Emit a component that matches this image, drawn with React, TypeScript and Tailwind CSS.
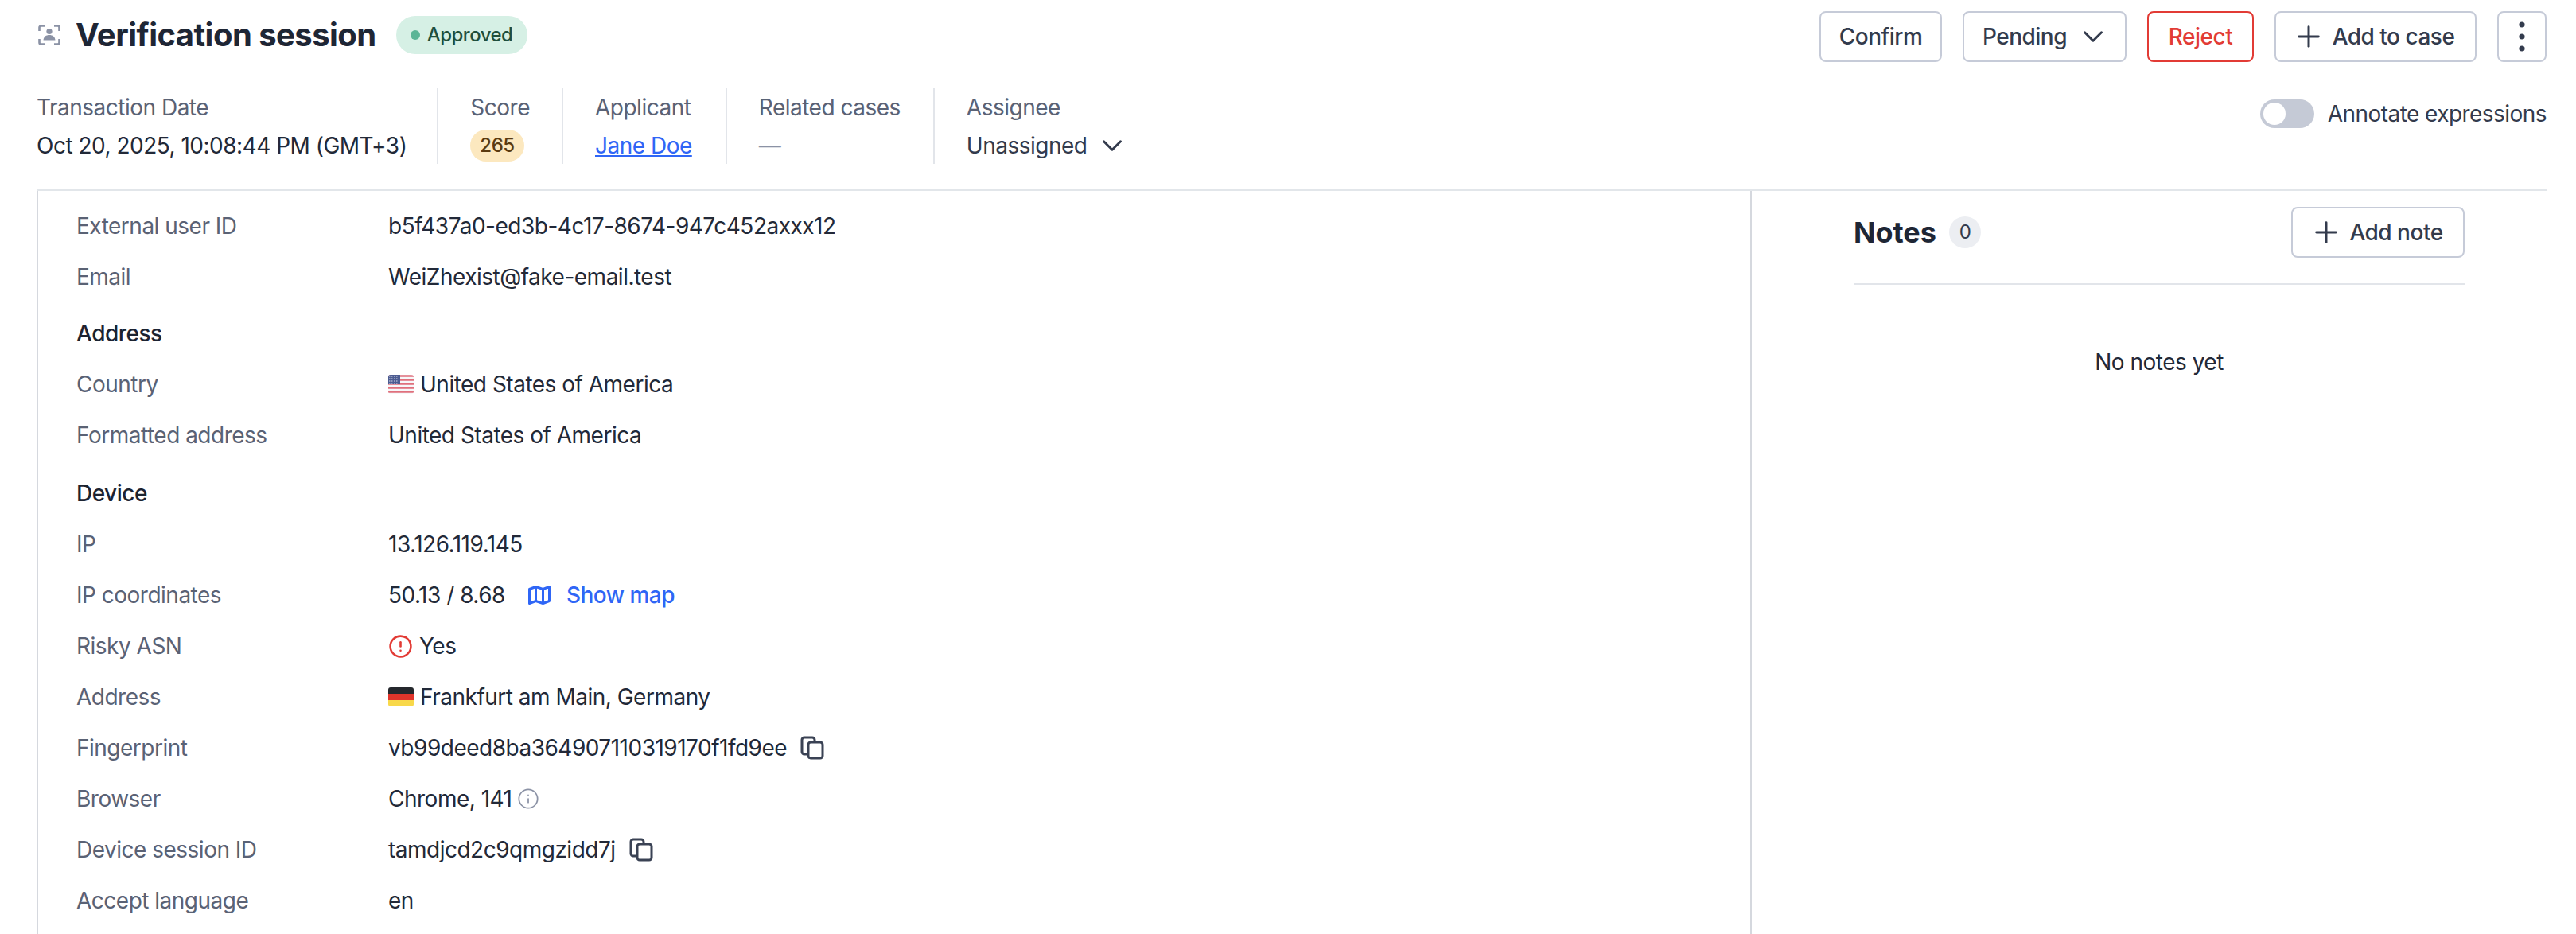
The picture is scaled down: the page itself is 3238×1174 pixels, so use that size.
import React from "react";
import { ChevronDown, CircleAlert, Info, Plus } from "lucide-react";

const ScanUserIcon = () => (
	<svg className="w-[28px] h-[26px] shrink-0" viewBox="0 0 28 26" fill="none">
		<path
			d="M8 1.5H3.5a2 2 0 0 0-2 2V8M20 1.5h4.5a2 2 0 0 1 2 2V8M8 24.5H3.5a2 2 0 0 1-2-2V18M20 24.5h4.5a2 2 0 0 0 2-2V18"
			stroke="#8b92a5"
			strokeWidth="2.6"
		/>
		<circle cx="14" cy="8.5" r="3.6" fill="#8b92a5" />
		<path d="M6.5 19.5c.4-4.5 3.6-6.5 7.5-6.5s7.100 2 7.500 6.500z" fill="#8b92a5" />
	</svg>
);

const MapIcon = () => (
	<svg className="w-[28px] h-[24px] shrink-0" viewBox="0 0 28 24" fill="none" stroke="#2f66f6" strokeWidth="3" strokeLinejoin="round">
		<path d="M1.500 4.500 9.500 1.500 18.500 4.500 26.500 1.500V19.500L18.500 22.500 9.500 19.500 1.500 22.500z" />
		<path d="M9.500 1.500V19.500M18.500 4.500V22.500" />
	</svg>
);

const CopyIcon = () => (
	<svg className="w-[30px] h-[30px] shrink-0" viewBox="0 0 30 30" fill="none" stroke="#3a4254" strokeWidth="3">
		<path d="M8 23H5a3 3 0 0 1-3-3V5a3 3 0 0 1 3-3h10a3 3 0 0 1 3 3v2" />
		<rect x="10" y="8" width="18" height="20" rx="3" />
	</svg>
);

const UsFlag = () => (
	<svg className="w-[32px] h-[24px] shrink-0 rounded-[3px]" viewBox="0 0 32 24">
		<rect width="32" height="24" fill="#f7f7f9" />
		<path d="M0 1.500h32M0 6.500h32M0 11.500h32M0 16.500h32M0 21.500h32" stroke="#e0707c" strokeWidth="2.500" />
		<rect width="15" height="12" fill="#4d5d92" />
		<path d="M1 2h13M1 5h13M1 8h13M1 11h13" stroke="#d7dbe8" strokeWidth="1" strokeDasharray="1.500 1.500" />
	</svg>
);

const DeFlag = () => (
	<div className="w-[32px] h-[24px] shrink-0 rounded-[3px] overflow-hidden flex flex-col">
		<div className="flex-1 bg-[#25282d]" />
		<div className="flex-1 bg-[#e0352b]" />
		<div className="flex-1 bg-[#f8d84a]" />
	</div>
);

const Row = ({ label, children }: { label: string; children: React.ReactNode }) => (
	<div className="flex items-center h-[64px]">
		<div className="w-[392px] shrink-0 text-[#5a6275]">{label}</div>
		<div className="flex items-center text-[#222938]">{children}</div>
	</div>
);

const Heading = ({ children }: { children: React.ReactNode }) => (
	<div className="flex items-center h-[64px] mt-[7px] font-medium text-[#1c2331]">{children}</div>
);

const MetaCell = ({ label, children, className }: { label: string; children: React.ReactNode; className: string }) => (
	<div className={`border-r-2 border-[#e2e5ea] last:border-r-0 h-[96px] ${className}`}>
		<div className="h-[50px] flex items-center text-[#5a6275]">{label}</div>
		<div className="h-[46px] flex items-center text-[#222938]">{children}</div>
	</div>
);

const buttonClass =
	"h-[64px] flex items-center justify-center rounded-[8px] border-2 border-[#c6cbd8] bg-white text-[#333b4d] font-medium";

export default function App() {
	return (
		<div className="w-[3238px] h-[1174px] overflow-hidden bg-white text-[28px] tracking-[-0.5px] font-['Inter',sans-serif]">
			<div className="pl-[46px] pr-[37px]">
				<div className="flex items-start justify-between pt-[14px] h-[110px]">
					<div className="flex items-center h-[60px] pl-[2px]">
						<ScanUserIcon />
						<h1 className="ml-[19px] text-[40px] font-bold tracking-[-0.55px] text-[#1e2635]">Verification session</h1>
						<div className="ml-[25px] h-[48px] pl-[18px] pr-[19px] rounded-full bg-[#d6f0e5] flex items-center gap-[9px] text-[24px] font-medium text-[#1f4f3c]">
							<span className="w-[12px] h-[12px] rounded-full bg-[#5bb596]" />
							Approved
						</div>
					</div>
					<div className="flex items-center gap-[26px]">
						<button className={`${buttonClass} w-[154px]`}>Confirm</button>
						<button className={`${buttonClass} w-[206px] gap-[12px] pl-[4px]`}>
							Pending
							<ChevronDown size={42} strokeWidth={1.700} />
						</button>
						<button className="h-[64px] w-[134px] flex items-center justify-center rounded-[8px] border-2 border-[#e23b35] bg-white text-[#e23b35] font-medium">
							Reject
						</button>
						<button className={`${buttonClass} w-[254px] gap-[9px] pr-[6px]`}>
							<Plus size={42} strokeWidth={1.700} />
							Add to case
						</button>
						<button className={`${buttonClass} w-[62px]`}>
							<svg className="w-[8px] h-[40px]" viewBox="0 0 8 40" fill="#333b4d">
								<circle cx="4" cy="5" r="3.600" />
								<circle cx="4" cy="20" r="3.600" />
								<circle cx="4" cy="35" r="3.600" />
							</svg>
						</button>
					</div>
				</div>

				<div className="flex items-start justify-between h-[130px] border-b-2 border-[#e2e6ea]">
					<div className="flex items-start">
						<MetaCell label="Transaction Date" className="pr-[38px]">
							Oct 20, 2025, 10:08:44 PM (GMT+3)
						</MetaCell>
						<MetaCell label="Score" className="px-[40px]">
							<span className="h-[40px] px-[12px] rounded-full bg-[#fce8bf] text-[#5a3a10] text-[24px] font-medium flex items-center">265</span>
						</MetaCell>
						<MetaCell label="Applicant" className="pl-[40px] pr-[42px]">
							<a href="#applicant" className="text-[#2f66f6] underline">
								Jane Doe
							</a>
						</MetaCell>
						<MetaCell label="Related cases" className="pl-[40px] pr-[41px]">
							<span className="text-[#8b92a5]">—</span>
						</MetaCell>
						<MetaCell label="Assignee" className="px-[40px]">
							<span className="flex items-center gap-[11px] text-[#333b4d]">
								Unassigned
								<ChevronDown size={42} strokeWidth={1.700} />
							</span>
						</MetaCell>
					</div>
					<div className="flex items-center gap-[17px] mt-[12px] tracking-[-0.55px] text-[#333b4d]">
						<div className="w-[68px] h-[36px] rounded-full bg-[#c5cad6] p-[4px]">
							<div className="w-[28px] h-[28px] rounded-full bg-white" />
						</div>
						Annotate expressions
					</div>
				</div>

				<div className="flex h-[934px]">
					<div className="w-[2156px] shrink-0 border-l-2 border-r-2 border-[#d5d8de] pl-[48px] pt-[12px]">
						<Row label="External user ID">b5f437a0-ed3b-4c17-8674-947c452axxx12</Row>
						<Row label="Email">WeiZhexist@fake-email.test</Row>
						<Heading>Address</Heading>
						<Row label="Country">
							<span className="flex items-center gap-[8px]">
								<UsFlag />
								United States of America
							</span>
						</Row>
						<Row label="Formatted address">United States of America</Row>
						<div className="h-[2px]" />
						<Heading>Device</Heading>
						<Row label="IP">13.126.119.145</Row>
						<Row label="IP coordinates">
							50.13 / 8.68
							<span className="flex items-center gap-[20px] ml-[29px] text-[#2f66f6] font-medium">
								<MapIcon />
								Show map
							</span>
						</Row>
						<Row label="Risky ASN">
							<span className="flex items-center gap-[8px]">
								<CircleAlert size={31} strokeWidth={2} color="#e23b35" />
								Yes
							</span>
						</Row>
						<Row label="Address">
							<span className="flex items-center gap-[8px]">
								<DeFlag />
								Frankfurt am Main, Germany
							</span>
						</Row>
						<Row label="Fingerprint">
							vb99deed8ba364907110319170f1fd9ee
							<span className="ml-[17px] flex">
								<CopyIcon />
							</span>
						</Row>
						<Row label="Browser">
							Chrome, 141
							<span className="ml-[6px] flex">
								<Info size={28} strokeWidth={1.500} color="#8b92a5" />
							</span>
						</Row>
						<Row label="Device session ID">
							tamdjcd2c9qmgzidd7j
							<span className="ml-[17px] flex">
								<CopyIcon />
							</span>
						</Row>
						<Row label="Accept language">en</Row>
					</div>

					<div className="flex-1 pl-[128px] pr-[103px]">
						<div className="flex items-center justify-between pt-[20px] pb-[32px] border-b-2 border-[#e2e5ea]">
							<div className="flex items-center gap-[16px]">
								<h2 className="text-[36px] font-bold tracking-normal text-[#1e2635]">Notes</h2>
								<span className="w-[40px] h-[40px] rounded-full bg-[#eceef2] flex items-center justify-center text-[24px] text-[#333b4d]">0</span>
							</div>
							<button className={`${buttonClass} w-[218px] gap-[8px] pr-[4px]`}>
								<Plus size={42} strokeWidth={1.700} />
								Add note
							</button>
						</div>
						<div className="mt-[76px] text-center text-[#222938]">No notes yet</div>
					</div>
				</div>
			</div>
		</div>
	);
}
